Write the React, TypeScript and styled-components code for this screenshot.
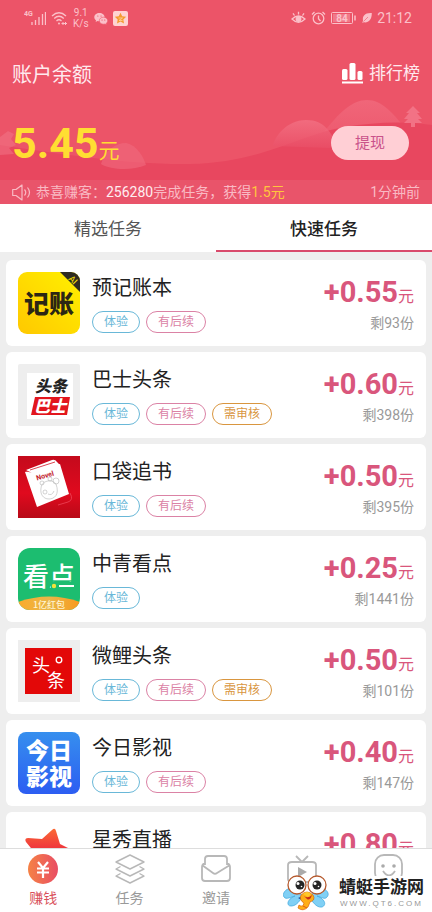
import React from 'react';
import styled, { createGlobalStyle, css } from 'styled-components';

const GlobalStyle = createGlobalStyle`
  * { box-sizing: border-box; }
  body {
    margin: 0;
    background: #eeeeee;
    font-family: Roboto, "Noto Sans CJK SC", sans-serif;
    color: #222222;
  }
  button { font: inherit; color: inherit; background: none; border: 0; padding: 0; margin: 0; cursor: pointer; }
  a { color: inherit; text-decoration: none; }
  h1, h2, p, ul { margin: 0; padding: 0; font-weight: 400; }
  ul { list-style: none; }
  svg { display: block; flex: none; }
`;

const Screen = styled.div`
  position: relative;
  display: flex;
  flex-direction: column;
  height: 100vh;
  overflow: hidden;
`;

const Header = styled.header`
  position: relative;
  flex: none;
  background: #ec5468;
  color: #ffe9ee;
`;

const Scenery = styled.svg`
  position: absolute;
  inset: 0;
  width: 100%;
  height: 100%;
`;

const HeaderContent = styled.div`
  position: relative;
`;

const StatusBar = styled.div`
  display: flex;
  align-items: center;
  justify-content: space-between;
  height: 36px;
  padding: 0 20px 0 24px;
  color: #fbc0c9;
`;

const StatusGroup = styled.div`
  display: flex;
  align-items: center;
  gap: 5px;
`;

const Speed = styled.span`
  font-size: 10px;
  line-height: 11px;
  text-align: center;
`;

const Clock = styled.time`
  font-size: 14px;
  line-height: 20px;
`;

const TitleRow = styled.div`
  display: flex;
  align-items: center;
  justify-content: space-between;
  height: 76px;
  padding: 2px 12px 0;
`;

const PageTitle = styled.h1`
  font-size: 20px;
  line-height: 28px;
`;

const RankButton = styled.button`
  display: flex;
  align-items: center;
  gap: 6px;
  margin-bottom: 4px;
  font-size: 17px;
  line-height: 24px;
`;

const BalanceRow = styled.div`
  display: flex;
  align-items: center;
  justify-content: space-between;
  height: 68px;
  padding: 0 23px 6px 12px;
`;

const Balance = styled.p`
  padding-top: 8px;
  color: #ffde32;
  font-size: 21px;
  line-height: 48px;

  strong {
    font-size: 43px;
    font-weight: 700;
  }
`;

const WithdrawButton = styled.button`
  height: 34px;
  padding: 0 24px;
  border-radius: 17px;
  background: #ffcfd5;
  color: #c9528a;
  font-size: 15px;
  line-height: 34px;
`;

const Notice = styled.div`
  display: flex;
  align-items: center;
  gap: 5px;
  height: 24px;
  padding: 0 12px;
  background: rgba(255, 255, 255, 0.07);
  color: #f9bac4;
  font-size: 14px;
  line-height: 24px;
  white-space: nowrap;

  p { flex: 1; }
  b { font-weight: 400; color: #ffeef1; }
  em { font-style: normal; color: #ffc53d; }
`;

const Tabs = styled.nav`
  display: flex;
  flex: none;
  background: #ffffff;
`;

const Tab = styled.button<{ $active?: boolean }>`
  flex: 1;
  height: 48px;
  border-bottom: 2px solid ${p => (p.$active ? '#d94a6c' : 'transparent')};
  color: ${p => (p.$active ? '#222222' : '#555555')};
  font-size: 17px;
  font-weight: ${p => (p.$active ? 500 : 400)};
`;

const TaskList = styled.ul`
  flex: 1;
  min-height: 0;
  display: flex;
  flex-direction: column;
  gap: 6px;
  padding: 8px 6px 0;
  overflow-y: auto;
  scrollbar-width: none;
`;

const Card = styled.li`
  display: flex;
  flex: none;
  gap: 12px;
  padding: 12px;
  border-radius: 6px;
  background: #ffffff;
`;

const TaskInfo = styled.div`
  display: flex;
  flex: 1;
  flex-direction: column;
  gap: 7px;
`;

const TaskName = styled.h2`
  font-size: 20px;
  line-height: 32px;
`;

const TagRow = styled.div`
  display: flex;
  gap: 6px;
`;

type Tone = 'blue' | 'pink' | 'orange';

const toneStyles = {
  blue: css`color: #69b8d8;`,
  pink: css`color: #db82a5;`,
  orange: css`color: #d9963f;`,
};

const Tag = styled.span<{ $tone: Tone }>`
  height: 22px;
  padding: 0 11px;
  border: 1px solid currentColor;
  border-radius: 11px;
  font-size: 12px;
  line-height: 20px;
  white-space: nowrap;
  ${p => toneStyles[p.$tone]}
`;

const Reward = styled.div`
  display: flex;
  flex-direction: column;
  justify-content: flex-end;
  text-align: right;
  white-space: nowrap;
`;

const Price = styled.p`
  color: #d9567c;
  font-size: 16px;
  line-height: 30px;

  strong {
    font-size: 29px;
    font-weight: 700;
  }
`;

const Remaining = styled.p`
  color: #999999;
  font-size: 14px;
  line-height: 22px;
`;

const BottomNav = styled.nav`
  display: flex;
  flex: none;
  height: 64px;
  border-top: 1px solid #dddddd;
  background: #ffffff;
`;

const NavLink = styled.a<{ $active?: boolean }>`
  display: flex;
  flex: 1;
  flex-direction: column;
  align-items: center;
  gap: 2px;
  padding-top: 4px;
  color: ${p => (p.$active ? '#d9505a' : '#999999')};
  font-size: 14px;
  line-height: 22px;
`;

const Watermark = styled.div`
  position: absolute;
  right: 0;
  bottom: 0;
  display: flex;
  align-items: center;
  gap: 8px;
  height: 38px;
  padding: 0 8px 0 0;
`;

const WatermarkText = styled.div`
  padding-left: 2px;
  background: #ffffff;
  text-align: center;
`;

const WatermarkName = styled.p`
  color: #222222;
  font-size: 17px;
  font-weight: 700;
  line-height: 22px;
`;

const WatermarkSite = styled.p`
  color: #999999;
  font-family: "Liberation Sans", sans-serif;
  font-size: 8px;
  letter-spacing: 2px;
  line-height: 12px;
`;

const logoFont = '"Noto Sans CJK SC", sans-serif';

const HillScenery = () => (
  <Scenery viewBox="0 0 432 204" preserveAspectRatio="none" aria-hidden="true">
    <defs>
      <linearGradient id="hill" x1="0" y1="0" x2="0" y2="1">
        <stop offset="0" stopColor="#f4788a" />
        <stop offset="1" stopColor="#ea5068" />
      </linearGradient>
    </defs>
    <path d="M322 134C340 112 352 100 367 100S392 112 410 134V160H322Z" fill="url(#hill)" opacity=".5" />
    <path d="M0 145C60 154 130 165 190 164C265 162 300 134 345 127C375 122 405 121 432 125V204H0Z" fill="#e8475f" />
    <path d="M273 146C274 138 286 120 306 120S330 134 336 141L330 148Z" fill="url(#hill)" opacity=".65" />
    <path d="M101 164C105 150 116 143 126 143C137 145 144 158 146 165C132 171 111 170 101 164Z" fill="#f06b7e" opacity=".6" />
    <path d="M0 137L8 131L14 134L11 139L16 145L9 148L14 154L0 155Z" fill="#f27789" opacity=".5" />
    <path d="M413 106L420 113H417L422 119H418L422 123H415V127H411V123H404L408 119H404L409 113H406Z" fill="#f27285" />
  </Scenery>
);

const Signal = () => (
  <svg width="22" height="16" viewBox="0 0 22 16" aria-label="4G 信号" role="img">
    <text x="0" y="6" fontSize="7" fontWeight="700" fill="currentColor">4G</text>
    <path d="M8 15V12M11.500 15V10M15 15V7M18.500 15V4M21.500 15V2" stroke="currentColor" strokeWidth="1.300" />
  </svg>
);

const Wifi = () => (
  <svg width="17" height="15" viewBox="0 0 17 15" fill="none" stroke="currentColor" strokeWidth="1.300" aria-hidden="true">
    <path d="M1 5Q8 -1.500 15 5M3.200 7.500Q8 3 12.800 7.500M5.500 10Q8 7.600 10.500 10" />
    <circle cx="8" cy="12.500" r="1" fill="currentColor" stroke="none" />
    <path d="M10.500 12.500H16M12 11V14M14.500 11V14" strokeWidth="1" />
  </svg>
);

const Chat = () => (
  <svg width="14" height="13" viewBox="0 0 14 13" aria-hidden="true">
    <path d="M5.500 1C2.500 1 .3 2.900.3 5.200c0 1.300.7 2.400 1.800 3.200L1.600 10l1.900-1c.6.2 1.200.3 2 .3C8.300 9.300 10.600 7.500 10.600 5.200S8.300 1 5.500 1Z" fill="currentColor" />
    <path d="M9.500 5.200c-2.400 0-4.200 1.500-4.200 3.500s1.800 3.500 4.200 3.500c.5 0 1-.1 1.500-.2l1.500.8-.4-1.300c1-.7 1.600-1.700 1.600-2.800 0-2-1.900-3.500-4.200-3.500Z" fill="currentColor" stroke="#ec5468" strokeWidth=".6" />
    <path d="M3.800 4h.1M7 4h.1M8 8h.1M10.700 8h.1" stroke="#ec5468" strokeWidth="1.200" strokeLinecap="round" />
  </svg>
);

const StarApp = () => (
  <svg width="15" height="15" viewBox="0 0 15 15" aria-hidden="true">
    <rect width="15" height="15" rx="2" fill="#ffd3d2" />
    <path d="M7.500 1.700l1.700 3.600 4 .5-2.900 2.700.7 4-3.500-2-3.500 2 .7-4L1.800 5.800l4-.5Z" fill="#f59b2f" />
    <path d="M5.500 7h4L6 9.500h3.500" fill="none" stroke="#ffd3a0" strokeWidth=".8" />
  </svg>
);

const Eye = () => (
  <svg width="15" height="14" viewBox="0 0 15 14" fill="none" stroke="currentColor" strokeWidth="1.300" aria-hidden="true">
    <path d="M1 8Q7.500 2 14 8Q7.500 14.500 1 8ZM7.500 3.500V.8M3.500 4.500L2 2.300M11.500 4.500L13 2.300" />
    <circle cx="7.500" cy="8" r="2.300" fill="currentColor" />
  </svg>
);

const Alarm = () => (
  <svg width="15" height="14" viewBox="0 0 15 14" fill="none" stroke="currentColor" strokeWidth="1.300" aria-hidden="true">
    <circle cx="7.500" cy="7.500" r="5.300" />
    <path d="M7.500 4.500V7.700L9.500 10M1 3.500L3.500 1M14 3.500L11.500 1" />
  </svg>
);

const Battery = () => (
  <svg width="26" height="12" viewBox="0 0 26 12" aria-label="电量 84" role="img">
    <rect x=".5" y=".5" width="21" height="11" rx="1" fill="none" stroke="currentColor" />
    <rect x="2" y="2" width="17" height="8" fill="currentColor" opacity=".35" />
    <path d="M24 3.500V8.500" stroke="currentColor" strokeWidth="1.500" />
    <text x="11" y="9.500" fontSize="10" fontWeight="700" fill="currentColor" textAnchor="middle">84</text>
  </svg>
);

const Leaf = () => (
  <svg width="10" height="12" viewBox="0 0 10 12" aria-hidden="true">
    <path d="M9.800 1C3 .5 .2 4 1 8.500L.3 11l1.500-.7C6.500 11 9.800 8 9.800 1Z" fill="currentColor" />
    <path d="M1.500 9.500L6 5" stroke="#ec5468" strokeWidth=".6" />
  </svg>
);

const Podium = () => (
  <svg width="21" height="21" viewBox="0 0 21 21" fill="#ffffff" aria-hidden="true">
    <rect x="0" y="6" width="5.500" height="11" rx="1.500" />
    <rect x="7.500" y="0" width="6" height="17" rx="1.500" />
    <rect x="15.500" y="8" width="5" height="9" rx="1.500" />
    <rect x="0" y="18.500" width="21" height="2" />
  </svg>
);

const Speaker = () => (
  <svg width="19" height="17" viewBox="0 0 19 17" fill="none" stroke="currentColor" strokeWidth="1.200" strokeLinejoin="round" aria-hidden="true">
    <path d="M.7 5.500H4L10 1V16L4 11.500H.7ZM12.500 5.500Q15 8.500 12.500 11.500M15.500 3.500Q19.500 8.500 15.500 13.500" />
  </svg>
);

const LedgerLogo = () => (
  <svg width="62" height="62" viewBox="0 0 62 62" aria-hidden="true">
    <defs>
      <linearGradient id="ledger" x1="1" y1="0" x2="0" y2="1">
        <stop offset="0" stopColor="#fff000" />
        <stop offset="1" stopColor="#ffc800" />
      </linearGradient>
      <clipPath id="ledgerClip"><rect width="62" height="62" rx="9" /></clipPath>
    </defs>
    <g clipPath="url(#ledgerClip)">
      <rect width="62" height="62" fill="url(#ledger)" />
      <path d="M42 0H62V20Z" fill="#2e2b20" />
      <text x="55" y="11" fontSize="9" fill="#ffe400" textAnchor="middle" transform="rotate(45 55 8)">AI</text>
      <text x="31" y="41" fontFamily={logoFont} fontSize="25" fontWeight="900" fill="#2b2614" textAnchor="middle">记账</text>
    </g>
  </svg>
);

const BusLogo = () => (
  <svg width="62" height="62" viewBox="0 0 62 62" aria-hidden="true">
    <rect width="62" height="62" rx="2" fill="#eeeeee" />
    <rect x="9" y="9" width="46" height="46" fill="#ffffff" />
    <path d="M17 33H52L49 51H13Z" fill="#e2161d" />
    <g fontFamily={logoFont} fontSize="16" fontWeight="900" fontStyle="italic" textAnchor="middle">
      <text x="33" y="28" fill="#222222">头条</text>
      <text x="32" y="48" fill="#ffffff">巴士</text>
    </g>
  </svg>
);

const NovelLogo = () => (
  <svg width="62" height="62" viewBox="0 0 62 62" aria-hidden="true">
    <defs>
      <linearGradient id="novel" x1="0" y1="0" x2="0" y2="1">
        <stop offset="0" stopColor="#c40a1c" />
        <stop offset=".6" stopColor="#e00a1e" />
        <stop offset="1" stopColor="#b80a18" />
      </linearGradient>
    </defs>
    <rect width="62" height="62" fill="url(#novel)" />
    <path d="M8 14L34 4Q37 3 39 6L42 9L14 17Z" fill="#ffffff" />
    <path d="M12 14L37 6" stroke="#d01325" strokeWidth=".8" />
    <path d="M7 16C10 15 12 17 14 16L42 8L51 38L19 51Z" fill="#ffffff" />
    <path d="M52 37Q56 44 50 46L40 49" fill="none" stroke="#ee4558" strokeWidth=".8" />
    <text x="27" y="22" fontSize="7" fontWeight="700" fill="#c1182a" textAnchor="middle" transform="rotate(-16 27 20)">Novel</text>
    <g fill="none" stroke="#b5b5b5" strokeWidth=".6">
      <path d="M23 32C23 25 34 22 38 28C42 39 36 43 31 43C25 43 22 38 23 32Z" />
      <circle cx="24" cy="27" r="2" /><circle cx="32" cy="23" r="2" />
      <ellipse cx="38" cy="25" rx="3" ry="3" /><circle cx="27" cy="36" r="2" />
      <path d="M30 38Q34 40 36 35" />
    </g>
  </svg>
);

const WatchLogo = () => (
  <svg width="62" height="62" viewBox="0 0 62 62" aria-hidden="true">
    <defs>
      <linearGradient id="ribbon" x1="0" y1="0" x2="1" y2="0">
        <stop offset="0" stopColor="#fbab2b" />
        <stop offset=".5" stopColor="#e9b648" />
        <stop offset="1" stopColor="#f99a1e" />
      </linearGradient>
      <clipPath id="watchClip"><rect width="62" height="62" rx="12" /></clipPath>
    </defs>
    <g clipPath="url(#watchClip)">
      <rect width="62" height="62" fill="#1cbd70" />
      <path d="M0 54Q31 43 62 54V62H0Z" fill="url(#ribbon)" />
      <text x="31" y="38" fontFamily={logoFont} fontSize="26" fontWeight="500" fill="#ffffff" textAnchor="middle">看点</text>
      <path d="M33 34H58V42H33Z" fill="#1cbd70" />
      <circle cx="36" cy="38" r="2.200" fill="#f4e23c" />
      <path d="M41 38H56" stroke="#ffffff" strokeWidth="2.200" />
      <text x="31" y="60" fontFamily={logoFont} fontSize="9" fontWeight="500" fill="#fff3cf" textAnchor="middle">1亿红包</text>
    </g>
  </svg>
);

const CarpLogo = () => (
  <svg width="62" height="62" viewBox="0 0 62 62" aria-hidden="true">
    <rect width="62" height="62" fill="#eeeeee" />
    <rect x="7" y="8" width="47" height="46" fill="#e30808" />
    <g fontFamily={logoFont} fontSize="18" fill="#ffffff" textAnchor="middle">
      <text x="23" y="32">头</text>
      <text x="38" y="47">条</text>
    </g>
    <circle cx="41" cy="20" r="2.800" fill="none" stroke="#ffffff" strokeWidth="1.300" />
  </svg>
);

const TodayLogo = () => (
  <svg width="62" height="62" viewBox="0 0 62 62" aria-hidden="true">
    <defs>
      <linearGradient id="today" x1="0" y1="0" x2="0" y2="1">
        <stop offset="0" stopColor="#368fee" />
        <stop offset="1" stopColor="#2c5df2" />
      </linearGradient>
    </defs>
    <rect width="62" height="62" rx="8" fill="url(#today)" />
    <g fontFamily={logoFont} fontSize="23" fontWeight="900" fill="#ffffff" textAnchor="middle">
      <text x="31" y="27">今日</text>
      <text x="31" y="53">影视</text>
    </g>
  </svg>
);

const StarLogo = () => (
  <svg width="62" height="62" viewBox="0 0 62 62" aria-hidden="true">
    <defs>
      <linearGradient id="star" x1="0" y1="0" x2="0" y2="1">
        <stop offset="0" stopColor="#fb6a35" />
        <stop offset=".4" stopColor="#f03a3c" />
      </linearGradient>
    </defs>
    <path d="M8 18Q6 14 10 14L24 15L34 6Q37 3 38 7L42 20L54 26Q58 29 53 31L43 36L42 48Q40 52 37 48L28 40L14 45Q10 44 12 40L17 29Z" fill="url(#star)" />
  </svg>
);

const CoinIcon = () => (
  <svg width="32" height="32" viewBox="0 0 32 32" aria-hidden="true">
    <defs>
      <linearGradient id="coin" x1="0" y1="0" x2="1" y2="0">
        <stop offset="0" stopColor="#f58245" />
        <stop offset="1" stopColor="#e94d64" />
      </linearGradient>
    </defs>
    <circle cx="16" cy="16" r="15" fill="url(#coin)" />
    <path d="M11 9L16 15L21 9M10 15.500H22M10 19.500H22M16 15V25" fill="none" stroke="#ffffff" strokeWidth="2.200" />
  </svg>
);

const iconLine = { fill: 'none', stroke: '#b8b8b8', strokeWidth: 1.8, strokeLinejoin: 'round' as const };

const LayersIcon = () => (
  <svg width="32" height="32" viewBox="0 0 32 32" {...iconLine} strokeWidth={1.4} aria-hidden="true">
    <path d="M16 2L30 9L16 16L2 9ZM6.500 13.500L2 16L16 23L30 16L25.500 13.500M6.500 20.500L2 23L16 30L30 23L25.500 20.500" />
  </svg>
);

const MailIcon = () => (
  <svg width="32" height="32" viewBox="0 0 32 32" {...iconLine} aria-hidden="true">
    <path d="M5 12V6Q5 3 8 3H24Q27 3 27 6V12M5 10Q2 11 2 14V25Q2 28 5 28H27Q30 28 30 25V14Q30 11 27 10M2 12L13 20Q15 21.500 17 20L30 12" />
  </svg>
);

const VideoIcon = () => (
  <svg width="32" height="32" viewBox="0 0 32 32" {...iconLine} aria-hidden="true">
    <path d="M10 3L16 9L22 3M6 9H26Q30 9 30 12V26Q30 29 26 29H6Q2 29 2 26V12Q2 9 6 9Z" />
    <path d="M12 14L21 19L12 24Z" fill="#aaaaaa" stroke="none" />
  </svg>
);

const FaceIcon = () => (
  <svg width="32" height="32" viewBox="0 0 32 32" {...iconLine} aria-hidden="true">
    <rect x="2" y="2" width="27" height="27" rx="9" />
    <path d="M10 18Q16 27 22 18" />
    <circle cx="10" cy="13" r="1.800" fill="#aaaaaa" stroke="none" />
    <circle cx="21" cy="13" r="1.800" fill="#aaaaaa" stroke="none" />
  </svg>
);

const Dragonfly = () => (
  <svg width="46" height="36" viewBox="0 0 46 36" aria-hidden="true">
    <path d="M8 13C2 14 -1 19 1 22C3 25 8 22 12 21C4 24 3 31 8 31C14 31 17 25 20 21ZM38 13C44 14 47 19 44 22C42 25 38 22 34 21C42 24 44 30 39 32C33 33 29 26 26 21Z" fill="#80d0f5" stroke="#46ace0" strokeWidth=".8" />
    <path d="M15 23L20 21H29L31 24L25 28Z" fill="#163e91" />
    <path d="M18 20Q24 14 30 20Q33 25 27 27L25 32Q20 37 15 33L16 30Q20 33 21 28Q16 25 18 20Z" fill="#ffad16" stroke="#d9660d" strokeWidth=".7" />
    <path d="M20 31L24 33" stroke="#e25b11" strokeWidth="1" />
    <path d="M21 21Q25 24 29 20Q27 26 24 24Z" fill="#c72c18" />
    <circle cx="14" cy="10" r="9" fill="#ffffff" stroke="#b65a2e" strokeWidth="1.300" />
    <circle cx="34" cy="10" r="9" fill="#ffffff" stroke="#b65a2e" strokeWidth="1.300" />
    <circle cx="17" cy="10" r="4.500" fill="#252525" />
    <circle cx="34" cy="10" r="4.500" fill="#252525" />
    <circle cx="15" cy="8.500" r="1.500" fill="#ffffff" /><circle cx="18.500" cy="11.500" r=".8" fill="#ffffff" />
    <circle cx="32" cy="8.500" r="1.500" fill="#ffffff" /><circle cx="35.500" cy="11.500" r=".8" fill="#ffffff" />
    <path d="M20 19Q24 15 28 19L25 22Z" fill="#ffc928" />
  </svg>
);

const TAGS: Record<string, Tone> = { 体验: 'blue', 有后续: 'pink', 需审核: 'orange' };

const TASKS = [
  { name: '预记账本', price: '0.55', left: 93, tags: ['体验', '有后续'], Logo: LedgerLogo },
  { name: '巴士头条', price: '0.60', left: 398, tags: ['体验', '有后续', '需审核'], Logo: BusLogo },
  { name: '口袋追书', price: '0.50', left: 395, tags: ['体验', '有后续'], Logo: NovelLogo },
  { name: '中青看点', price: '0.25', left: 1441, tags: ['体验'], Logo: WatchLogo },
  { name: '微鲤头条', price: '0.50', left: 101, tags: ['体验', '有后续', '需审核'], Logo: CarpLogo },
  { name: '今日影视', price: '0.40', left: 147, tags: ['体验', '有后续'], Logo: TodayLogo },
  { name: '星秀直播', price: '0.80', left: null, tags: [], Logo: StarLogo },
];

const NAV = [
  { label: '赚钱', Icon: CoinIcon, active: true },
  { label: '任务', Icon: LayersIcon },
  { label: '邀请', Icon: MailIcon },
  { label: '', aria: '视频', Icon: VideoIcon },
  { label: '', aria: '我的', Icon: FaceIcon },
];

export default function App() {
  return (
    <>
      <GlobalStyle />
      <Screen>
        <Header>
          <HillScenery />
          <HeaderContent>
            <StatusBar>
              <StatusGroup>
                <Signal />
                <Wifi />
                <Speed>9.1<br />K/s</Speed>
                <Chat />
                <StarApp />
              </StatusGroup>
              <StatusGroup>
                <Eye />
                <Alarm />
                <Battery />
                <Leaf />
                <Clock>21:12</Clock>
              </StatusGroup>
            </StatusBar>
            <TitleRow>
              <PageTitle>账户余额</PageTitle>
              <RankButton type="button"><Podium />排行榜</RankButton>
            </TitleRow>
            <BalanceRow>
              <Balance><strong>5.45</strong>元</Balance>
              <WithdrawButton type="button">提现</WithdrawButton>
            </BalanceRow>
            <Notice>
              <Speaker />
              <p>恭喜赚客：<b>256280</b>完成任务，获得<em>1.5元</em></p>
              <span>1分钟前</span>
            </Notice>
          </HeaderContent>
        </Header>
        <Tabs>
          <Tab type="button">精选任务</Tab>
          <Tab type="button" $active aria-current="true">快速任务</Tab>
        </Tabs>
        <TaskList>
          {TASKS.map(({ name, price, left, tags, Logo }) => (
            <Card key={name}>
              <Logo />
              <TaskInfo>
                <TaskName>{name}</TaskName>
                <TagRow>
                  {tags.map(tag => <Tag key={tag} $tone={TAGS[tag]}>{tag}</Tag>)}
                </TagRow>
              </TaskInfo>
              <Reward>
                <Price><strong>+{price}</strong>元</Price>
                <Remaining>{left === null ? '\u00a0' : `剩${left}份`}</Remaining>
              </Reward>
            </Card>
          ))}
        </TaskList>
        <BottomNav>
          {NAV.map(({ label, aria, Icon, active }) => (
            <NavLink key={label || aria} href="#" $active={active} aria-label={aria}>
              <Icon />
              {label}
            </NavLink>
          ))}
        </BottomNav>
        <Watermark>
          <Dragonfly />
          <WatermarkText>
            <WatermarkName>蜻蜓手游网</WatermarkName>
            <WatermarkSite>WWW.QT6.COM</WatermarkSite>
          </WatermarkText>
        </Watermark>
      </Screen>
    </>
  );
}
